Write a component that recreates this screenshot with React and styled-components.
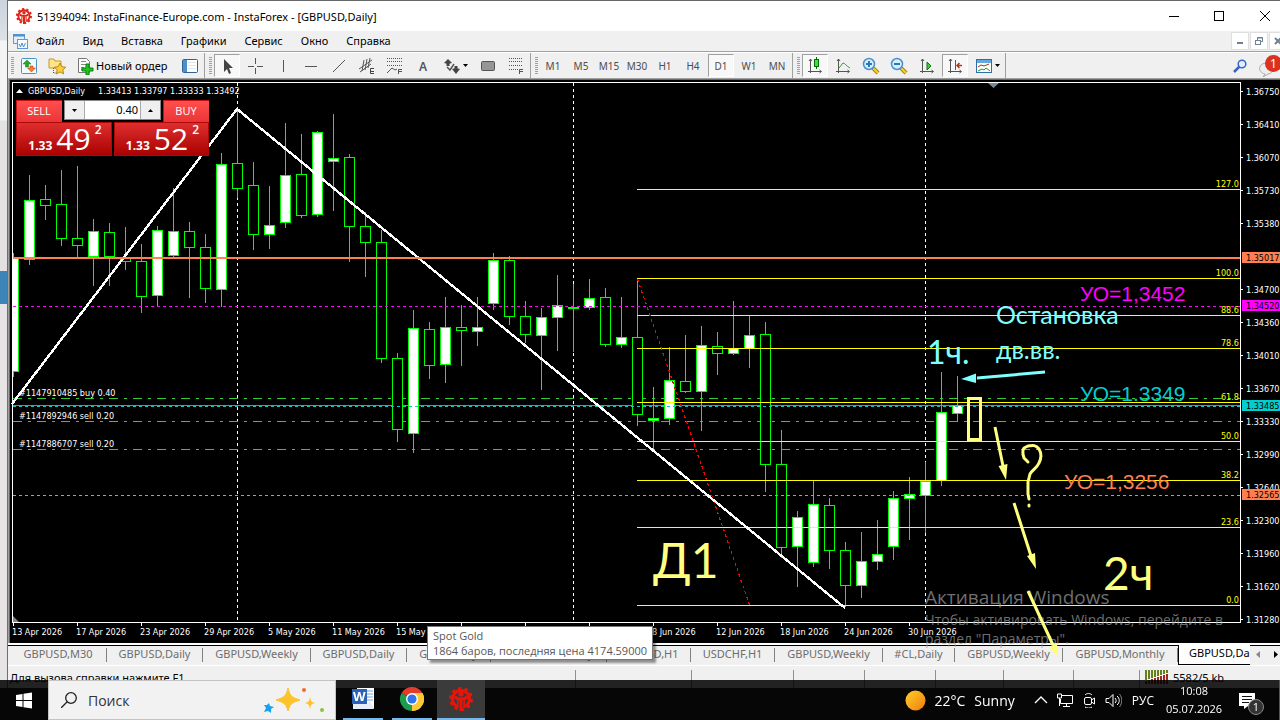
import React, { useState } from 'react';
import styled, { createGlobalStyle } from 'styled-components';

const UI_FONT = `'Noto Sans', 'Open Sans', sans-serif`;
const NARROW_FONT = `'Open Sans', 'Noto Sans', sans-serif`;
const CHART_FONT = `'DejaVu Sans Condensed', 'DejaVu Sans', sans-serif`;
const NOTE_FONT = `Lato, 'Open Sans', sans-serif`;

const GlobalStyle = createGlobalStyle`
  * {
    box-sizing: border-box;
  }
  body {
    margin: 0;
    overflow: hidden;
    font-family: ${UI_FONT};
    font-size: 11px;
    color: #000;
  }
  button,
  input {
    font: inherit;
    color: inherit;
    margin: 0;
    padding: 0;
    border: 0;
    background: transparent;
  }
  svg {
    display: block;
    flex: none;
  }
`;

const Desktop = styled('div')`
  display: flex;
  height: 100vh;
  background: linear-gradient(
    to bottom,
    #cdd3dc 0,
    #dde2e8 40px,
    #f4f4f5 41px,
    #f4f4f5 120px,
    #e3e1e1 121px,
    #e3e1e1 271px,
    #3d85b8 271px,
    #3d85b8 304px,
    #e6e4e4 304px
  );
`;

const Window = styled('main')`
  display: flex;
  flex-direction: column;
  flex: 1;
  min-width: 0;
  height: calc(100vh - 32px);
  margin-left: 7px;
  border-left: 1px solid #6e6e6e;
  background: #f0f0f0;
  overflow: hidden;
`;

const TitleBar = styled('header')`
  display: flex;
  align-items: center;
  flex: none;
  height: 31px;
  padding-left: 8px;
  border-top: 1px solid #666;
  background: #fff;
`;

const Title = styled('h1')`
  flex: 1;
  margin: 0 0 0 5px;
  font-size: 11px;
  font-weight: 400;
`;

const WindowButton = styled('button')`
  display: flex;
  align-items: center;
  justify-content: center;
  width: 45px;
  height: 30px;
  &:last-child {
    justify-content: flex-start;
    width: 39px;
    padding-left: 19px;
  }
`;

const MenuBar = styled('nav')`
  display: flex;
  align-items: center;
  flex: none;
  height: 20px;
  padding-left: 5px;
`;

const MenuItems = styled('div')`
  display: flex;
  flex: 1;
  gap: 18px;
  margin-left: 8px;
`;

const MenuItem = styled('button')`
  line-height: 18px;
`;

const MdiButton = styled('button')`
  display: flex;
  align-items: center;
  justify-content: center;
  width: 18px;
  height: 18px;
  margin-left: 1px;
  border: 1px solid #dfdfdf;
  background: #fff;
  &:last-child {
    width: 11px;
    justify-content: flex-start;
    padding-left: 4px;
    border-right: 0;
    overflow: hidden;
  }
`;

const ToolBar = styled('div')`
  display: flex;
  flex: none;
  height: 27px;
  padding-top: 1px;
  border-top: 1px solid #a0a0a0;
  box-shadow: inset 0 1px 0 #fff;
`;

const ToolGroup = styled('div')`
  display: flex;
  align-items: center;
  height: 25px;
  padding-right: ${props => props.$pad || 0}px;
  border-right: 1px solid #a0a0a0;
  margin-right: 1px;
`;

const Grip = styled('span')`
  width: 3px;
  height: 18px;
  margin: 0 1px 0 3px;
  background: repeating-linear-gradient(
    to bottom,
    #a0a0a0 0,
    #a0a0a0 1px,
    #f0f0f0 1px,
    #f0f0f0 2px
  );
`;

const ToolButton = styled('button')`
  display: flex;
  align-items: center;
  justify-content: center;
  gap: 2px;
  width: ${props => props.$width || 26}px;
  height: 23px;
  margin: 0 1px;
  border: 1px solid transparent;
  font-size: 10px;
  color: #4d4d4d;
  ${props =>
    props.$active &&
    `
    border-color: #a0a0a0 #fff #fff #a0a0a0;
    background: #f8f8f8;
  `}
`;

const OrderButton = styled('button')`
  display: flex;
  align-items: center;
  gap: 2px;
  width: 105px;
  height: 22px;
  padding-left: 5px;
  white-space: nowrap;
`;

const ToolEnd = styled('div')`
  display: flex;
  align-items: center;
  gap: 9px;
  margin-left: auto;
`;

const BubbleButton = styled('button')`
  position: relative;
  width: 24px;
  height: 22px;
  overflow: hidden;
`;

const Badge = styled('span')`
  position: absolute;
  top: 0;
  right: -2px;
  width: 17px;
  height: 17px;
  border-radius: 50%;
  background: #dc3020;
  color: #fff;
  font-size: 12px;
  line-height: 17px;
  text-align: center;
`;

const ChartArea = styled('section')`
  position: relative;
  z-index: 1;
  flex: none;
  border: 1px solid #a0a0a0;
  border-width: 1px 0 0 1px;
  background: #000;
`;

const ChartInner = styled('div')`
  position: relative;
  border: 1px solid #696969;
  border-width: 1px 0 0 1px;
`;

const ChartSvg = styled('svg')`
  width: 100%;
  height: auto;
  overflow: visible;
  font-family: ${CHART_FONT};
  font-size: 9px;
`;

const Trade = styled('form')`
  position: absolute;
  top: 20px;
  left: 6px;
  width: 193px;
  background: #000;
  color: #fff;
`;

const TradeTop = styled('div')`
  display: flex;
  justify-content: space-between;
  height: 22px;
`;

const TradeSide = styled('button')`
  width: 46px;
  height: 22px;
  padding-bottom: 2px;
  background: linear-gradient(#ff5050, #ea3535);
  box-shadow: inset 1px 1px 0 #c81010;
  color: #fff;
  font-family: ${NARROW_FONT};
`;

const Lot = styled('div')`
  display: flex;
  width: 97px;
  height: 20px;
  border: 1px solid #888;
  background: #fff;
  color: #000;
`;

const Step = styled('button')`
  display: flex;
  align-items: center;
  justify-content: center;
  width: 19px;
  background: #efefef;
`;

const LotInput = styled('input')`
  flex: 1;
  min-width: 0;
  padding: 0 2px 2px 0;
  border: 1px solid #aaa;
  border-width: 0 1px;
  text-align: right;
`;

const TradePrices = styled('div')`
  display: flex;
  gap: 2px;
`;

const TradePrice = styled('button')`
  display: flex;
  flex: 1;
  align-items: baseline;
  justify-content: flex-end;
  gap: 4px;
  height: 34px;
  padding-right: 10px;
  background: linear-gradient(#e03030, #a80000);
  box-shadow: inset 0 0 0 1px #b00808;
  color: #fff;
  font-family: ${NARROW_FONT};
`;

const Small = styled('span')`
  font-size: 12px;
  font-weight: 700;
`;

const Big = styled('span')`
  font-size: 30px;
  line-height: 34px;
`;

const Sup = styled('span')`
  align-self: flex-start;
  font-size: 12px;
  font-weight: 600;
  line-height: 16px;
`;

const Tooltip = styled('div')`
  position: absolute;
  top: 546px;
  left: 417px;
  width: 226px;
  height: 34px;
  padding: 1px 5px;
  border: 1px solid #767676;
  background: #fff;
  box-shadow: 3px 3px 2px rgba(0, 0, 0, 0.4);
  color: #575757;
  font-family: ${NARROW_FONT};
  line-height: 15px;
  white-space: nowrap;
`;

const TabBar = styled('div')`
  display: flex;
  align-items: center;
  flex: none;
  height: 22px;
  padding-left: 2px;
  border-top: 2px solid #fff;
  box-shadow: inset 0 1px 0 #000;
`;

const Tab = styled('button')`
  flex: none;
  width: ${props => props.$width}px;
  height: 14px;
  padding-bottom: 2px;
  border-right: 1px solid #808080;
  color: #6d6d6d;
  line-height: 12px;
  white-space: nowrap;
`;

const ActiveTab = styled('button')`
  flex: 1;
  min-width: 0;
  height: 20px;
  padding: 0 0 3px 10px;
  border: 1px solid #000;
  border-width: 0 0 1px 1px;
  background: #fff;
  line-height: 16px;
  text-align: left;
  overflow: hidden;
`;

const TabScroll = styled('div')`
  display: flex;
  gap: 14px;
  width: 30px;
  padding: 0 0 2px 6px;
`;

const StatusBar = styled('footer')`
  display: flex;
  flex: none;
  height: 23px;
  border-top: 1px solid #fff;
  padding: 4px 0 0 2px;
  line-height: 15px;
`;

const StatusText = styled('span')`
  flex: 1;
`;

const StatusCell = styled('span')`
  display: flex;
  gap: 4px;
  width: ${props => props.$width}px;
  height: 18px;
  padding-left: 5px;
  border-left: 1px solid #909090;
`;

const TaskBar = styled('footer')`
  position: fixed;
  z-index: 2;
  right: 0;
  bottom: 0;
  left: 0;
  display: flex;
  align-items: stretch;
  height: 40px;
  background: linear-gradient(rgba(0, 0, 0, 0.86) 8px, #060606 8px);
  color: #fff;
  font-family: ${NARROW_FONT};
`;

const StartButton = styled('button')`
  width: 48px;
  padding-left: 16px;
`;

const SearchBox = styled('label')`
  display: flex;
  align-items: center;
  width: 288px;
  padding: 0 10px 0 12px;
  border: 1px solid #c4c4c4;
  background: #f2f2f2;
  color: #333;
`;

const SearchInput = styled('input')`
  flex: 1;
  min-width: 0;
  margin-left: 11px;
  font-size: 14px;
  outline: 0;
  &::placeholder {
    color: #333;
    opacity: 1;
  }
`;

const Apps = styled('div')`
  display: flex;
  flex: 1;
  padding-left: 7px;
`;

const AppButton = styled('button')`
  display: flex;
  align-items: center;
  justify-content: center;
  width: ${props => (props.$active ? 48 : 40)}px;
  margin-right: ${props => props.$gap || 0}px;
  border-bottom: 2px solid #76b9ed;
  background: ${props => (props.$active ? '#3b3b3b' : 'transparent')};
`;

const Weather = styled('button')`
  display: flex;
  align-items: center;
  gap: 9px;
  margin-right: 19px;
  font-size: 14px;
`;

const Tray = styled('div')`
  display: flex;
  align-items: center;
  gap: 8px;
`;

const TrayButton = styled('button')`
  margin-left: 2px;
  font-size: 12px;
`;

const Clock = styled('time')`
  width: 56px;
  margin: 0 23px 0 4px;
  font-size: 11px;
  line-height: 18px;
  text-align: center;
`;

const Notifications = styled('button')`
  position: relative;
  width: 41px;
  margin-left: -6px;
  border-right: 1px solid #555;
`;

const Count = styled('span')`
  position: absolute;
  top: 19px;
  left: 9px;
  width: 16px;
  height: 16px;
  border: 1px solid #888;
  border-radius: 50%;
  background: #333;
  font-size: 11px;
  line-height: 14px;
`;

// high, body top, body bottom, low, filled (1) or hollow (0)
const candles = [
  [253, 258, 371, 376, 1], [175, 200, 259, 264, 1], [185, 199, 205, 219, 0],
  [170, 204, 238, 245, 0], [166, 238, 245, 257, 0], [219, 231, 256, 285, 1],
  [223, 232, 256, 285, 0], [227, 257, 261, 269, 0], [244, 261, 296, 312, 0],
  [226, 230, 295, 306, 1], [188, 231, 255, 256, 1], [222, 231, 247, 297, 0],
  [234, 247, 288, 302, 0], [153, 164, 289, 306, 1], [110, 163, 188, 197, 0],
  [162, 185, 234, 249, 0], [186, 225, 234, 248, 1], [123, 175, 222, 227, 1],
  [134, 174, 215, 217, 0], [131, 132, 214, 216, 1], [114, 158, 161, 210, 1],
  [154, 157, 226, 261, 0], [212, 226, 242, 276, 0], [230, 242, 358, 362, 0],
  [353, 358, 429, 441, 0], [310, 328, 433, 452, 1], [322, 329, 365, 378, 0],
  [297, 327, 364, 382, 1], [305, 327, 330, 365, 0], [297, 327, 331, 345, 1],
  [253, 260, 303, 309, 1], [256, 260, 316, 324, 0], [301, 316, 334, 342, 0],
  [308, 317, 335, 389, 1], [275, 305, 317, 350, 1], [284, 307, 308, 351, 0],
  [279, 298, 307, 309, 1], [288, 297, 344, 346, 0], [297, 337, 344, 347, 1],
  [278, 337, 414, 425, 0], [387, 418, 420, 450, 1], [347, 380, 418, 424, 1],
  [335, 381, 391, 392, 0], [326, 345, 391, 430, 1], [332, 346, 353, 374, 0],
  [301, 348, 353, 354, 1], [316, 335, 348, 367, 1], [322, 334, 464, 491, 0],
  [430, 464, 547, 557, 0], [511, 517, 546, 586, 1], [481, 504, 562, 566, 1],
  [498, 505, 550, 568, 0], [542, 550, 585, 606, 0], [532, 561, 585, 597, 1],
  [520, 554, 561, 569, 1], [491, 498, 546, 559, 1], [477, 494, 498, 539, 1],
  [462, 481, 495, 532, 1], [372, 412, 480, 485, 1], [376, 405, 413, 421, 1],
];

const fibLevels = [
  [189, '127.0'], [278, '100.0'], [315, '88.6'], [348, '78.6'], [402, '61.8'],
  [441, '50.0'], [480, '38.2'], [527, '23.6'], [605, '0.0'],
];

const prices = [
  [91, '1.36750'], [124, '1.36410'], [157, '1.36070'], [190, '1.35730'],
  [223, '1.35380'], [289, '1.34700'], [322, '1.34360'], [355, '1.34010'],
  [388, '1.33670'], [421, '1.33330'], [454, '1.32990'], [487, '1.32640'],
  [520, '1.32300'], [553, '1.31960'], [586, '1.31620'], [619, '1.31280'],
];

const priceTags = [
  [257, '1.35017', '#ff7f50'], [305, '1.34520', '#ff00ff'],
  [405, '1.33485', '#00ced1'], [494, '1.32565', '#ff7f50'],
];

const dates = [
  '13 Apr 2026', '17 Apr 2026', '23 Apr 2026', '29 Apr 2026', '5 May 2026',
  '11 May 2026', '15 May 2026', '21 May 2026', '27 May 2026', '2 Jun 2026',
  '8 Jun 2026', '12 Jun 2026', '18 Jun 2026', '24 Jun 2026', '30 Jun 2026',
];

const orders = [
  [398, '#1147910485 buy 0.40', 396], [421, '#1147892946 sell 0.20', 419],
  [449, '#1147886707 sell 0.20', 447],
];

const menu = ['Файл', 'Вид', 'Вставка', 'Графики', 'Сервис', 'Окно', 'Справка'];
const frames = ['M1', 'M5', 'M15', 'M30', 'H1', 'H4', 'D1', 'W1', 'MN'];

const tabs = [
  ['GBPUSD,M30', 97], ['GBPUSD,Daily', 96], ['GBPUSD,Weekly', 108],
  ['GBPUSD,Daily', 96], ['GOLD,Daily', 84], ['GBPUSD,Monthly', 116],
  ['EURUSD,H1', 84], ['USDCHF,H1', 84], ['GBPUSD,Weekly', 108],
  ['#CL,Daily', 72], ['GBPUSD,Weekly', 108], ['GBPUSD,Monthly', 115],
];

const Icon = ({ size = 18, children, ...rest }) => (
  <svg width={size} height={size} viewBox={`0 0 ${size} ${size}`} fill="none" {...rest}>
    {children}
  </svg>
);

const Caret = ({ up, color = '#000' }) => (
  <svg width="5" height="3" viewBox="0 0 5 3">
    <path d={up ? 'M0 3h5L2.5 0z' : 'M0 0h5L2.5 3z'} fill={color} />
  </svg>
);

const GearLogo = ({ size, color }) => (
  <svg width={size} height={size} viewBox="0 0 24 24" fill="none" stroke={color}>
    <circle cx="12" cy="12" r="10.5" strokeWidth="3" strokeDasharray="3.3 3.3" />
    <path d="M8 19.500A8.500 8.500 0 1 1 16 19.500" strokeWidth="3" />
    <circle cx="12" cy="7" r="2.600" fill={color} stroke="none" />
    <path d="M12 24V11M5.500 9.500c1.500 2 3.500 2.500 6.500 2.500s5-.5 6.500-2.500" strokeWidth="3" />
    <path d="M8.800 13v8M15.200 13v8" strokeWidth="1.600" />
  </svg>
);

const Magnifier = ({ minus }) => (
  <Icon>
    <path d="m11 11 5 5" stroke="#a98410" strokeWidth="4" />
    <path d="m11 11 5 5" stroke="#f2cf3d" strokeWidth="2" />
    <circle cx="7" cy="7" r="5.5" fill="#d5eefb" stroke="#4b90c8" strokeWidth="1.5" />
    <path d={minus ? 'M4 7h6' : 'M4 7h6M7 4v6'} stroke="#2f78b7" strokeWidth="2" />
  </Icon>
);

const AxisIcon = ({ children }) => (
  <Icon>
    <path d="M4.5 2v14M2 14.5h13M3 4l1.5-2L6 4M13.5 13l2 1.5-2 1.5" stroke="#555" />
    {children}
  </Icon>
);

const lineTools = [
  ['Курсор', <path d="M6 2v13l3-3 2 5 2-1-2-5h4z" fill="#444" />],
  ['Перекрестие', <path d="M9.500 1v6M9.500 11v6M2 9.500h6M11 9.500h6" stroke="#555" />],
  ['Вертикальная линия', <path d="M9.500 3v12" stroke="#555" />],
  ['Горизонтальная линия', <path d="M3 9.500h12" stroke="#555" />],
  ['Трендовая линия', <path d="M3 15 15 3" stroke="#555" />],
  [
    'Канал',
    <>
      <path d="m1 12 13-9M2 15l11-8M4 14l2-11M7 13l2-11M10 11l2-10" stroke="#555" />
      <path d="M16 11.500h-3.500v5H16M13 14.500h3" stroke="#444" />
    </>,
  ],
  [
    'Фибоначчи',
    <>
      <path d="M1 1.500h16M1 4.500h16M1 8.500h16" stroke="#555" strokeDasharray="1 1" />
      <path d="m1 16 5-5 3 2 2-1M12.500 17v-4.500H16M13 14.500h3" stroke="#555" />
    </>,
  ],
  [
    'Текст',
    <text x="5" y="14" fontSize="12" fontWeight="600" fill="#555">A</text>,
  ],
];

const Chart = () => (
  <ChartSvg viewBox="10 80 1270 563" role="img" aria-label="GBPUSD, Daily">
    <rect x="10" y="80" width="1270" height="563" fill="#000" />
    <g shapeRendering="crispEdges" fill="none" strokeWidth="1">
      {[237.5, 573.5, 925.5].map(x => (
        <path key={x} d={`M${x} 83V622`} stroke="#fff" strokeDasharray="3 3" />
      ))}
      {orders.map(([y]) => (
        <path key={y} d={`M13 ${y + 0.5}H1240`} stroke="#32cd32" strokeDasharray="9 6 3 6" />
      ))}
      <path d="M13 405.500H1240" stroke="#778899" />
      {candles.map(([high, top, bottom, low, filled], i) => {
        const x = 13 + i * 16;
        const left = i === 0 ? 12.5 : x - 4.5;
        return (
          <g key={x} stroke="#0f0">
            <path d={`M${x + 0.5} ${high}V${top}M${x + 0.5} ${bottom}V${low + 1}`} />
            <rect
              x={left}
              y={top + 0.5}
              width={x + 5.5 - left}
              height={bottom - top}
              fill={filled ? '#fff' : '#000'}
            />
          </g>
        );
      })}
      <path d="M13 306.500H1240" stroke="#f0f" strokeDasharray="3 3" />
      <path d="M13 406.500H1240" stroke="#00ced1" strokeDasharray="3 3" />
      <path d="M13 495.500H1240" stroke="#ff7f50" strokeDasharray="3 3" />
      {fibLevels.map(([y]) => (
        <path key={y} d={`M637 ${y + 0.5}H1240`} stroke="#ff0" />
      ))}
      <path d="m637.500 279 112 326" stroke="#f00" strokeWidth="1.200" strokeDasharray="3 3" />
      <path d="M12 404 237 109l608 499" stroke="#fff" strokeWidth="2.400" />
      <path d="M13 258H1240" stroke="#ff7f50" strokeWidth="2" />
      <path d="M12.500 622V82.500H1240.500V622.500H12" stroke="#fff" />
      {prices.map(([y]) => (
        <path key={y} d={`M1240 ${y + 0.5}h3`} stroke="#fff" />
      ))}
      {dates.map((date, i) => (
        <path key={date} d={`M${13.5 + i * 64} 623v3`} stroke="#fff" />
      ))}
    </g>
    <path d="M988 83h11l-5.500 5zM13 616v6h6z" fill="#778899" />
    <path d="M16 93h7l-3.500-4z" fill="#fff" />

    <g fill="#fff">
      <text x="28" y="94">GBPUSD,Daily</text>
      <text x="98" y="94">1.33413 1.33797 1.33333 1.33492</text>
      {orders.map(([y, label, base]) => (
        <text key={y} x="19" y={base}>{label}</text>
      ))}
      {prices.map(([y, label]) => (
        <text key={y} x="1246" y={y + 4}>{label}</text>
      ))}
      {dates.map((date, i) => (
        <text key={date} x={12 + i * 64} y="635">{date}</text>
      ))}
    </g>
    {priceTags.map(([y, label, color]) => (
      <g key={y}>
        <rect x="1242" y={y - 5} width="38" height="11" fill={color} />
        <text x="1246" y={y + 4}>{label}</text>
      </g>
    ))}
    <g fill="#ff0" textAnchor="end">
      {fibLevels.map(([y, label]) => (
        <text key={y} x="1239" y={y - 2}>{label}</text>
      ))}
    </g>

    <g fontFamily="'Liberation Sans', Arial, sans-serif" fontSize="21">
      <text x="1080" y="301" fill="#f0f">УО=1,3452</text>
      <text x="1080" y="401" fill="#00ced1">УО=1.3349</text>
      <text x="1064" y="489" fill="#ff7f50">УО=1,3256</text>
    </g>

    <g fill="#a0a0a0" fillOpacity="0.7" fontFamily={NARROW_FONT}>
      <text x="925" y="604" fontSize="19">Активация Windows</text>
      <text x="925" y="625" fontSize="14">Чтобы активировать Windows, перейдите в</text>
      <text x="925" y="644" fontSize="14">раздел "Параметры".</text>
    </g>

    <g fill="#80ffff" fontFamily={NOTE_FONT}>
      <text x="996" y="324" fontSize="25">Остановка</text>
      <text x="996" y="359" fontSize="25">дв.вв.</text>
      <text x="927" y="364" fontSize="32">1ч.</text>
      <path d="M1045 370.500v3l-68 6v-3z" />
      <path d="m961 379 15-5.500v9.500z" />
    </g>
    <g fill="#ffff80" fontFamily={NOTE_FONT}>
      <text x="653" y="578" fontSize="48">Д1</text>
      <text x="1103" y="590" fontSize="46">2ч</text>
      <path d="m1006 480-7.500-14 9-2zM1036 569l-9-13 8-3zM1058 657l-9-10 8-4z" />
    </g>
    <g fill="none" stroke="#ffff80" strokeWidth="3">
      <rect x="968.5" y="398.5" width="12" height="41" />
      <path d="m995 427 8 39M1014 503l17 53M1028 591l25 54" />
      <path
        d="M1028 462l-4-4c-2-5-1-9 0-10l4-2c5-1 8-1 11 3 3 5 2 10 0 14-2 5-7 7-9 11l-2 8v12l1 5M1029 505v1"
        strokeLinecap="round"
        strokeLinejoin="round"
      />
    </g>
  </ChartSvg>
);

const TradePanel = () => {
  const [lot, setLot] = useState('0.40');
  const step = delta => setLot((Number(lot) + delta).toFixed(2));

  return (
    <Trade onSubmit={e => e.preventDefault()}>
      <TradeTop>
        <TradeSide type="button">SELL</TradeSide>
        <Lot>
          <Step type="button" aria-label="Меньше" onClick={() => step(-0.01)}>
            <Caret />
          </Step>
          <LotInput aria-label="Объем" value={lot} onChange={e => setLot(e.target.value)} />
          <Step type="button" aria-label="Больше" onClick={() => step(0.01)}>
            <Caret up />
          </Step>
        </Lot>
        <TradeSide type="button">BUY</TradeSide>
      </TradeTop>
      <TradePrices>
        <TradePrice type="button">
          <Small>1.33</Small>
          <Big>49</Big>
          <Sup>2</Sup>
        </TradePrice>
        <TradePrice type="button">
          <Small>1.33</Small>
          <Big>52</Big>
          <Sup>2</Sup>
        </TradePrice>
      </TradePrices>
    </Trade>
  );
};

const Tools = () => {
  const [frame, setFrame] = useState('D1');

  return (
    <ToolBar>
      <ToolGroup>
        <Grip />
        <ToolButton aria-label="Новый график">
          <Icon>
            <rect x="1.5" y="1.5" width="15" height="15" rx="1" fill="#f3faff" stroke="#4b92c5" />
            <path d="M3 7h2.500v3h3V7H11L7 3z" fill="#28a928" stroke="#087808" strokeWidth=".5" />
            <path d="M7.500 11H10V9h3v2h2.500l-4 4z" fill="#f47a35" stroke="#a74310" strokeWidth=".5" />
          </Icon>
        </ToolButton>
        <ToolButton aria-label="Профили">
          <Icon>
            <path d="M1 2h5l1 2h6v7H1z" fill="#ffe38a" stroke="#c99a1d" />
            <path d="M5.500 11v5H10" stroke="#555" strokeDasharray="1 1" />
            <path d="m12 6 1.800 3.700 4 .5-3 2.700.8 4-3.600-2-3.600 2 .8-4-3-2.700 4-.5z" fill="#f9cf3a" stroke="#b98a16" />
          </Icon>
        </ToolButton>
        <OrderButton>
          <Icon>
            <path d="M2.500 1.500h8l3 3v11h-11z" fill="#fafafa" stroke="#777" />
            <path d="M5 4.500h5M5 7.500h6M5 10.500h3M5 12.500h2" stroke="#888" />
            <path d="M10 7h3v4h4v3h-4v4h-3v-4H6v-3h4z" fill="#25c125" stroke="#078207" />
          </Icon>
          Новый ордер
        </OrderButton>
        <ToolButton aria-label="Обзор рынка">
          <Icon>
            <rect x="1.5" y="2.5" width="15" height="13" rx="1" fill="#fff" stroke="#2f6296" />
            <path d="M2 3h4v12H2z" fill="#4e8fc9" />
            <path d="M7.500 5.500h8M7.500 8.500h8M7.500 11.500h8" stroke="#b9cce0" strokeDasharray="1 1" />
          </Icon>
        </ToolButton>
      </ToolGroup>
      <ToolGroup>
        <Grip />
        {lineTools.map(([label, drawing], i) => (
          <ToolButton key={label} aria-label={label} $active={i === 0}>
            <Icon>{drawing}</Icon>
          </ToolButton>
        ))}
        <ToolButton aria-label="Стрелки" $width={35}>
          <Icon>
            <path d="m1 6 4-4 4 4-4 1zM9 12l4-1 4 1-4 5z" fill="#444" />
            <path d="M3.500 5h3v4h-3zM11.500 9h3v4h-3z" fill="#444" />
            <path d="m4 10 3 3 4-6" stroke="#555" strokeWidth="1.500" />
          </Icon>
          <Caret />
        </ToolButton>
        <ToolButton aria-label="Прямоугольник">
          <Icon>
            <rect x="2.5" y="4.500" width="13" height="9" rx="1" fill="#969696" stroke="#555" />
          </Icon>
        </ToolButton>
        <ToolButton aria-label="Уровни">
          <Icon>
            <path d="M2 1.500h14M2 4.500h14M2 8.500h14M2 12.500h9" stroke="#555" strokeDasharray="1 1" />
            <path d="M12.500 17v-4.500H16M13 14.500h3" stroke="#555" />
          </Icon>
        </ToolButton>
      </ToolGroup>
      <ToolGroup $pad={1}>
        <Grip />
        {frames.map(name => (
          <ToolButton key={name} $active={name === frame} onClick={() => setFrame(name)}>
            {name}
          </ToolButton>
        ))}
      </ToolGroup>
      <ToolGroup>
        <Grip />
        <ToolButton aria-label="Свечи" $active>
          <AxisIcon>
            <path d="M10.500 0v12" stroke="#087008" />
            <rect x="8.500" y="2.500" width="4" height="7" fill="#3ee03e" stroke="#087008" />
          </AxisIcon>
        </ToolButton>
        <ToolButton aria-label="Линия">
          <AxisIcon>
            <path d="m5 11 4-5c2 0 3 3 7 5" stroke="#2aa52a" />
          </AxisIcon>
        </ToolButton>
        <ToolButton aria-label="Увеличить">
          <Magnifier />
        </ToolButton>
        <ToolButton aria-label="Уменьшить">
          <Magnifier minus />
        </ToolButton>
        <ToolButton aria-label="Автопрокрутка">
          <AxisIcon>
            <path d="m9 5 4 4-4 4z" fill="#3bd03b" stroke="#087808" />
          </AxisIcon>
        </ToolButton>
        <ToolButton aria-label="Сдвиг графика" $active>
          <AxisIcon>
            <path d="M9.500 3v10" stroke="#24679d" />
            <path d="M16 8.500h-5M13.500 6 11 8.500l2.500 2.500" stroke="#b33413" strokeWidth="1.500" />
          </AxisIcon>
        </ToolButton>
        <ToolButton aria-label="Шаблоны" $width={34}>
          <Icon>
            <rect x="1.500" y="2.500" width="15" height="13" fill="#fff" stroke="#2d6da8" />
            <path d="M2 3h14v3H2z" fill="#67a7df" />
            <path d="m3 10 3-2 3 1 5-2" stroke="#a33315" />
            <path d="m3 14 4-2 2 1 2-2 4 3" stroke="#279427" />
          </Icon>
          <Caret />
        </ToolButton>
      </ToolGroup>
      <ToolEnd>
        <Icon size={14}>
          <path d="m1 13 6-6" stroke="#3a63bf" strokeWidth="2.500" />
          <circle cx="9" cy="5" r="3.800" fill="#e4f0ff" stroke="#3565cf" strokeWidth="1.500" />
        </Icon>
        <BubbleButton aria-label="Сообщения">
          <Icon size={22}>
            <path d="M9 19c-8-2-7-11 2-11 8 0 9 10 1 11l-5 3z" fill="#eee" stroke="#aaa" />
          </Icon>
          <Badge>1</Badge>
        </BubbleButton>
      </ToolEnd>
    </ToolBar>
  );
};

const App = () => (
  <>
    <GlobalStyle />
    <Desktop>
      <Window>
        <TitleBar>
          <GearLogo size={16} color="#e02416" />
          <Title>51394094: InstaFinance-Europe.com - InstaForex - [GBPUSD,Daily]</Title>
          <WindowButton aria-label="Свернуть">
            <Icon size={10}><path d="M0 5.500h10" stroke="#000" /></Icon>
          </WindowButton>
          <WindowButton aria-label="Развернуть">
            <Icon size={10}><rect x=".5" y=".5" width="9" height="9" stroke="#000" /></Icon>
          </WindowButton>
          <WindowButton aria-label="Закрыть">
            <Icon size={10}><path d="m0 0 10 10M10 0 0 10" stroke="#000" /></Icon>
          </WindowButton>
        </TitleBar>

        <MenuBar>
          <Icon size={15}>
            <rect x=".5" y=".5" width="11" height="9" fill="#e3f0fc" stroke="#5b9bd3" />
            <path d="M0 1.500h12" stroke="#4b8fcd" strokeWidth="2" />
            <rect x="4.500" y="5.500" width="10" height="9" fill="#f4faff" stroke="#5b9bd3" />
            <path d="m6 10 1.500 3L9 9l1.500 4 2-4" stroke="#4b8fcd" />
          </Icon>
          <MenuItems>
            {menu.map(item => (
              <MenuItem key={item}>{item}</MenuItem>
            ))}
          </MenuItems>
          <MdiButton aria-label="Свернуть график">
            <Icon size={8}><path d="M1 6h6" stroke="#6f8093" strokeWidth="2" /></Icon>
          </MdiButton>
          <MdiButton aria-label="Восстановить график">
            <Icon size={8}>
              <path d="M2.500 3V.5h5v4H6M2 1h6" stroke="#6f8093" />
              <rect x=".5" y="3.500" width="5" height="4" fill="#fff" stroke="#6f8093" />
            </Icon>
          </MdiButton>
          <MdiButton aria-label="Закрыть график">
            <Icon size={8}><path d="m1 1 6 6M7 1 1 7" stroke="#6f8093" strokeWidth="2" /></Icon>
          </MdiButton>
        </MenuBar>

        <Tools />

        <ChartArea>
          <ChartInner>
            <Chart />
            <TradePanel />
            <Tooltip role="tooltip">
              Spot Gold
              <br />
              1864 баров, последняя цена 4174.59000
            </Tooltip>
          </ChartInner>
        </ChartArea>

        <TabBar>
          {tabs.map(([label, width], i) => (
            <Tab key={i} $width={width}>{label}</Tab>
          ))}
          <ActiveTab>GBPUSD,Daily</ActiveTab>
          <TabScroll>
            <svg width="4" height="7" viewBox="0 0 4 7"><path d="M4 0v7L0 3.500z" fill="#888" /></svg>
            <svg width="4" height="7" viewBox="0 0 4 7"><path d="M0 0v7l4-3.500z" fill="#000" /></svg>
          </TabScroll>
        </TabBar>

        <StatusBar>
          <StatusText>Для вызова справки нажмите F1</StatusText>
          {[116, 102, 71, 71, 68, 70, 66].map((width, i) => (
            <StatusCell key={i} $width={width} />
          ))}
          <StatusCell $width={141}>
            <svg width="24" height="14" viewBox="0 0 24 14">
              {[0, 3, 6, 9, 12, 15, 18, 21].map(x => (
                <g key={x}>
                  <rect x={x} y="0" width="2" height={10 - x / 3} fill="#64801c" />
                  <rect x={x} y={11 - x / 3} width="2" height={3 + x / 3} fill="#a3261c" />
                </g>
              ))}
            </svg>
            5582/5 kb
          </StatusCell>
        </StatusBar>
      </Window>
    </Desktop>

    <TaskBar>
      <StartButton aria-label="Пуск">
        <svg width="16" height="17" viewBox="0 0 16 17" fill="#fff">
          <path d="M0 3l6.500-1v6H0zM7.500 1.800 16 .5V8H7.500zM0 9h6.500v6L0 14zM7.500 9H16v7.500l-8.500-1.300z" />
        </svg>
      </StartButton>
      <SearchBox>
        <Icon size={16}>
          <circle cx="10" cy="6" r="5.300" stroke="#222" strokeWidth="1.300" />
          <path d="M6.200 9.800 0 16" stroke="#222" strokeWidth="1.300" />
        </Icon>
        <SearchInput type="search" aria-label="Поиск" placeholder="Поиск" />
        <svg width="62" height="26" viewBox="0 0 62 26">
          <path d="M25 1c2 8 3 9 12 12-9 3-10 4-12 11-2-7-3-8-12-11 9-3 10-4 12-12z" fill="#fcc42a" stroke="#fcc42a" strokeLinejoin="round" />
          <path d="M47 10c1 4 1 5 5 6-4 1-4 2-5 6-1-4-1-5-5-6 4-1 4-2 5-6z" fill="#fcc42a" />
          <path d="m6 16 1 3 4 1-3 2v4l-3-2-4 1 2-4-2-3h3z" fill="#16a1ee" />
          <circle cx="41" cy="3" r="2" fill="#f36b2b" />
          <circle cx="59" cy="23" r="2" fill="#8bc53f" />
        </svg>
      </SearchBox>
      <Apps>
        <AppButton aria-label="Word" $gap={9}>
          <svg width="22" height="22" viewBox="0 0 22 22">
            <path d="M5 0h17v20H5z" fill="#fff" />
            <path d="M15 3h6M15 6h6M15 9h6M15 12h6" stroke="#71a4dc" />
            <path d="M0 1h15v15H0z" fill="#2a62b9" />
            <text x="1" y="13" fontSize="13" fontWeight="700" fill="#fff">W</text>
            <path d="M1 16h14l3-3 4 8H1z" fill="#e4eefa" />
          </svg>
        </AppButton>
        <AppButton aria-label="Chrome" $gap={5}>
          <svg width="24" height="24" viewBox="0 0 24 24">
            <path d="M12 12 1.600 6a12 12 0 0 1 20.800 0z" fill="#e33b2e" />
            <path d="M12 12 22.400 6A12 12 0 0 1 12 24z" fill="#fcc934" />
            <path d="M12 12v12A12 12 0 0 1 1.600 6z" fill="#1e9c4d" />
            <path d="M12 6h10.400A12 12 0 0 1 12 24l5.200-9z" fill="#fcc934" />
            <circle cx="12" cy="12" r="6" fill="#fff" />
            <circle cx="12" cy="12" r="4.600" fill="#2f74e8" />
          </svg>
        </AppButton>
        <AppButton aria-label="InstaForex" $active>
          <GearLogo size={24} color="#e8140a" />
        </AppButton>
      </Apps>
      <Weather>
        <svg width="21" height="21" viewBox="0 0 21 21">
          <defs>
            <linearGradient id="sun" x1="0" y1="0" x2="1" y2="1">
              <stop offset="0" stopColor="#ffd02b" />
              <stop offset="1" stopColor="#f07b0c" />
            </linearGradient>
          </defs>
          <circle cx="10.500" cy="10.500" r="10" fill="url(#sun)" />
        </svg>
        <span>22°C</span>
        <span>Sunny</span>
      </Weather>
      <Tray>
        <Icon size={14}><path d="m1 10 6-6 6 6" stroke="#fff" strokeWidth="1.300" /></Icon>
        <Icon size={17}>
          <path d="M6 3.500h10.500v8H4.500V7M10.500 12v2.500M7 14.500h7M1.500 2v4h4V2zM3.500 6v8" stroke="#fff" />
        </Icon>
        <Icon size={16}>
          <rect x="3.500" y="5.500" width="7" height="7" rx="1.500" stroke="#fff" />
          <path d="m10.500 8 3-2v6l-3-2M4 3c2-2 5-2 7 0M4 15c2 1.500 5 1.500 7 0" stroke="#fff" />
        </Icon>
        <Icon size={17}>
          <path d="M1 6.500h3l4-4v12l-4-4H1zM10 6c1.500 1.500 1.500 4 0 5M12 4c3 2.500 3 6.500 0 9" stroke="#fff" />
          <path d="M14.500 2c3 4 3 9 0 13" stroke="#888" />
        </Icon>
        <TrayButton>РУС</TrayButton>
        <Clock>10:08<br />05.07.2026</Clock>
      </Tray>
      <Notifications aria-label="Уведомления">
        <Icon size={17}>
          <path d="M0 1h16v13H9l-4 3v-3H0z" fill="#fff" />
          <path d="M3 4.500h10M3 7.500h10M3 10.500h7" stroke="#111" />
        </Icon>
        <Count>1</Count>
      </Notifications>
    </TaskBar>
  </>
);

export default App;
